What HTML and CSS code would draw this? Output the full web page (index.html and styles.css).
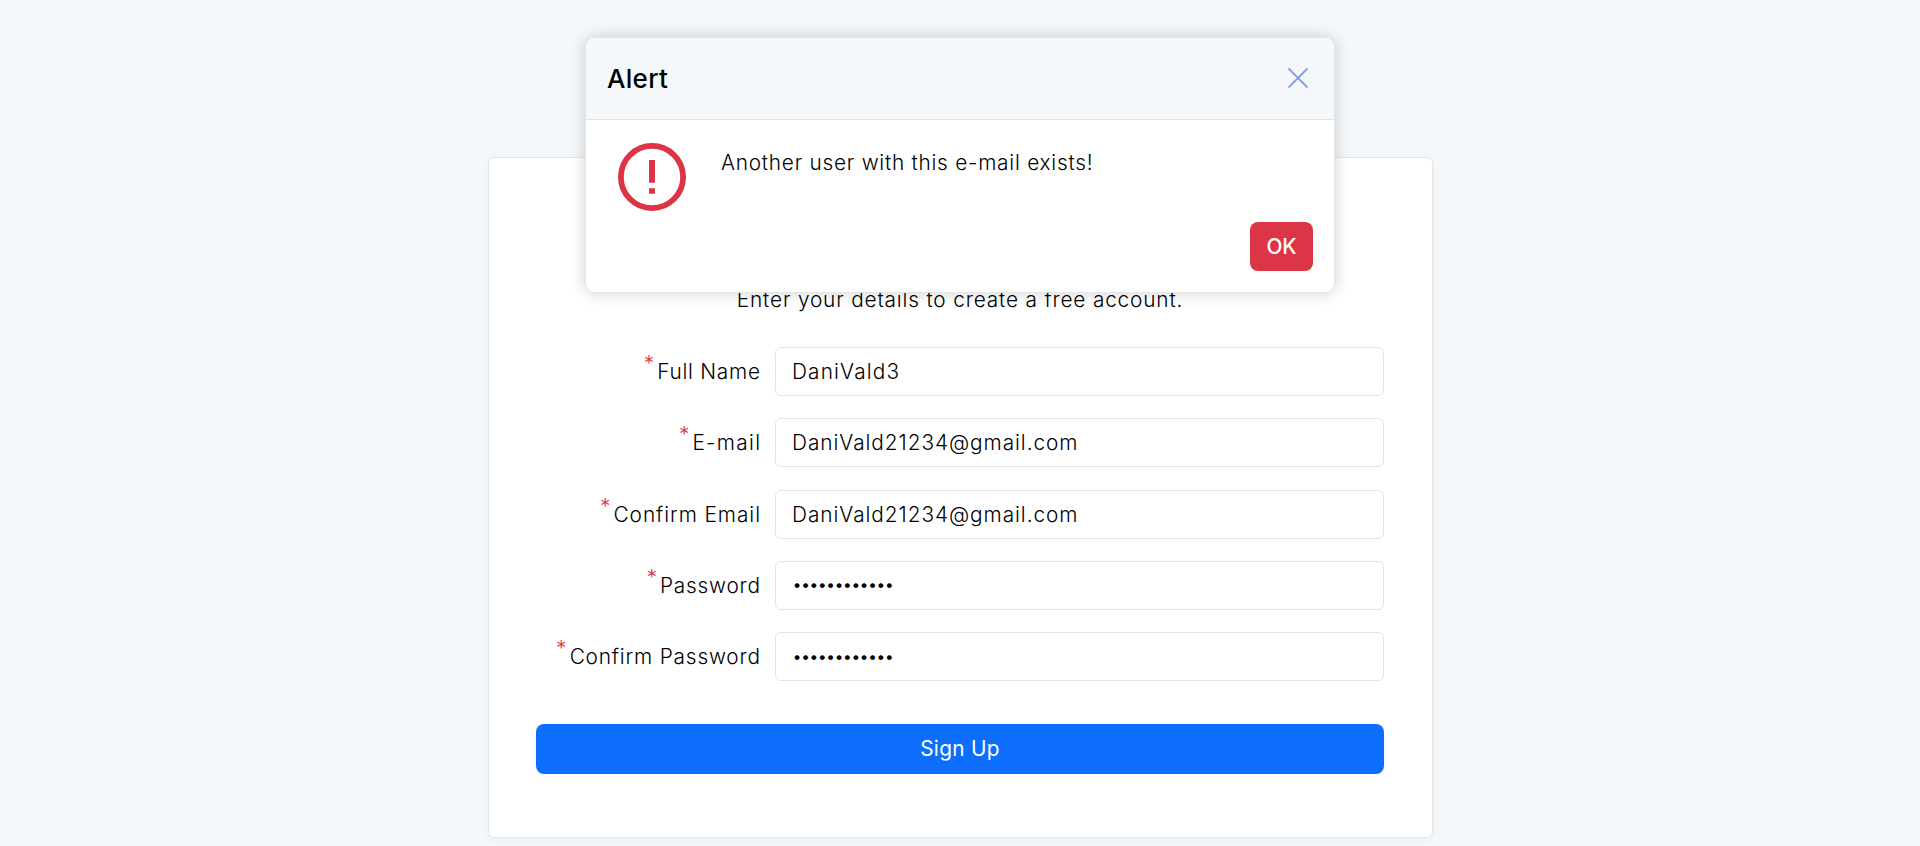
FILE: index.html
```html
<!DOCTYPE html>
<html lang="en">
<head>
<meta charset="utf-8">
<title>Sign Up</title>
<link rel="stylesheet" href="styles.css">
</head>
<body>
<main class="card">
  <p class="intro">Enter your details to create a free account.</p>
  <form class="form">
    <div class="row"><label class="label" for="name"><span class="req">*</span><span class="t-name">Full Name</span></label><input class="field field-name" id="name" type="text" value="DaniVald3"></div>
    <div class="row"><label class="label" for="email"><span class="req">*</span><span class="t-email">E-mail</span></label><input class="field" id="email" type="text" value="DaniVald21234@gmail.com"></div>
    <div class="row"><label class="label" for="email2"><span class="req">*</span><span class="t-email2">Confirm Email</span></label><input class="field" id="email2" type="text" value="DaniVald21234@gmail.com"></div>
    <div class="row"><label class="label" for="pw"><span class="req">*</span><span class="t-pw">Password</span></label><input class="field field-pw" id="pw" type="password" value="abcdefghijkl"></div>
    <div class="row"><label class="label" for="pw2"><span class="req">*</span><span class="t-pw2">Confirm Password</span></label><input class="field field-pw" id="pw2" type="password" value="abcdefghijkl"></div>
    <button class="submit" type="button">Sign Up</button>
  </form>
</main>
<section class="modal" role="alertdialog">
  <header class="modal-head">
    <h5 class="modal-title">Alert</h5>
    <svg class="close" viewBox="0 0 20 20"><path d="M0.5 0.5L19.5 19.5M19.5 0.5L0.5 19.5"/></svg>
  </header>
  <div class="modal-body">
    <svg class="alert-icon" viewBox="0 0 68 68"><circle class="ring" cx="34" cy="34" r="31.1"/><path d="M31 17h6v22.7h-6zM31 45.3h6v5.5h-6z"/></svg>
    <p class="message">Another user with this e-mail exists!</p>
  </div>
  <footer class="modal-foot"><button class="ok" type="button">OK</button></footer>
</section>
</body>
</html>
```
FILE: styles.css
```css
* { box-sizing: border-box; }
body {
  margin: 0;
  height: 846px;
  overflow: hidden;
  background: #f4f8fb;
  color: #000;
  font-family: Inter, "Open Sans", sans-serif;
  font-size: 20.8px;
  font-weight: 300;
}
.card {
  width: 945px;
  height: 681px;
  margin: 157px auto 0 488px;
  padding: 126px 48px 0 47px;
  background: #fff;
  border: 1px solid #e3e6e9;
  border-radius: 6px;
  box-shadow: 0 2px 8px rgba(0, 0, 0, .04);
}
.intro { margin: 0; line-height: 32px; text-align: center; letter-spacing: .84px; }
.form { display: flex; flex-direction: column; gap: 22.25px; margin-top: 31px; }
.row { display: flex; height: 49px; gap: 15px; }
.label { display: flex; width: 224px; justify-content: flex-end; line-height: 49px; white-space: nowrap; }
.req { margin-right: 3px; color: #dc3545; font-size: 21px; line-height: 33px; }
.t-name { margin-right: -.75px; letter-spacing: .75px; }
.t-email { margin-right: -1.3px; letter-spacing: 1.3px; }
.t-email2 { margin-right: -.95px; letter-spacing: .95px; }
.t-pw { margin-right: -.8px; letter-spacing: .8px; }
.t-pw2 { margin-right: -.83px; letter-spacing: .83px; }
.field {
  flex: 1;
  min-width: 0;
  padding: 0 16px;
  color: #000;
  font: inherit;
  letter-spacing: .95px;
  background: #fff;
  border: 1px solid #e2e3e4;
  border-radius: 6px;
  outline: none;
}
.field-name { letter-spacing: 1.15px; }
.field-pw { padding-bottom: 1px; font-size: 18px; letter-spacing: -1.75px; }
.submit {
  height: 50px;
  margin-top: 20.5px;
  padding: 0;
  color: #fff;
  font: inherit;
  font-weight: 400;
  letter-spacing: .3px;
  background: #0d6efd;
  border: 0;
  border-radius: 8px;
}
.modal {
  position: absolute;
  left: 585px;
  top: 37px;
  width: 750px;
  height: 256px;
  background: #fff;
  border: 1px solid #e4e6e8;
  border-radius: 10px;
  box-shadow: 0 0 16px rgba(0, 0, 0, .18);
}
.modal-head {
  display: flex;
  height: 82px;
  padding: 0 26px 0 21px;
  align-items: center;
  justify-content: space-between;
  background: #f4f8fb;
  border-bottom: 1px solid #e2e4e6;
  border-radius: 9px 9px 0 0;
}
.modal-title { margin: 0; font-size: 26px; font-weight: 500; letter-spacing: .3px; }
.close { width: 20px; height: 20px; margin-bottom: 1px; fill: none; stroke: #8198e4; stroke-width: 1.9; }
.modal-body { display: flex; height: 102px; padding: 22px 32px 0; }
.alert-icon { flex: none; width: 68px; height: 68px; margin-top: .5px; fill: #dc3545; }
.ring { fill: none; stroke: #dc3545; stroke-width: 5.8; }
.message { margin: 5px 0 0 35px; line-height: 32px; white-space: nowrap; letter-spacing: .76px; }
.modal-foot { display: flex; justify-content: flex-end; padding-right: 21px; }
.ok {
  width: 63px;
  height: 49px;
  padding: 0;
  color: #fff;
  font: inherit;
  font-weight: 500;
  background: #dc3545;
  border: 0;
  border-radius: 8px;
}
```
